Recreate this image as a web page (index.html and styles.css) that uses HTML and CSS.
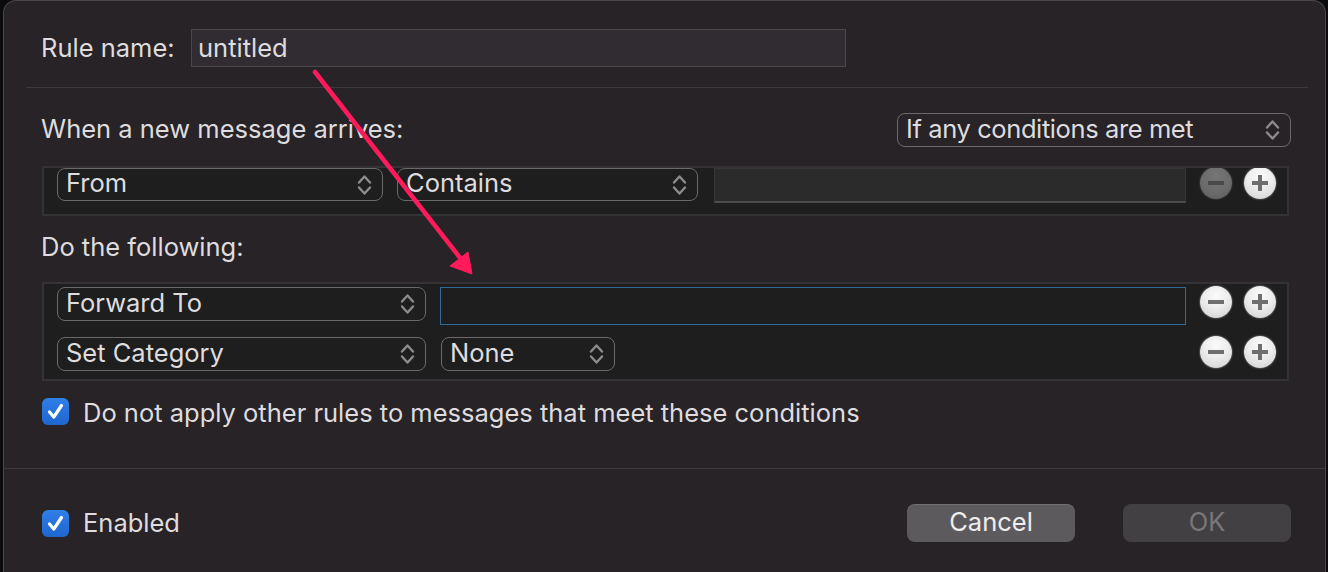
FILE: index.html
```html
<!DOCTYPE html>
<html>
<head>
<meta charset="utf-8">
<link rel="stylesheet" href="styles.css">
</head>
<body>
<div class="window">
  <div class="name-row">
    <span class="lbl name-lbl">Rule name:</span>
    <div class="field name-field">untitled</div>
  </div>
  <div class="sep sep-inset"></div>
  <div class="when-row">
    <span class="lbl">When a new message arrives:</span>
    <div class="popup popup-any"><span>If any conditions are met</span>
      <svg class="chev" viewBox="0 0 15 22"><path d="M2 8.5 L7.5 2.5 L13 8.5 M2 13.5 L7.5 19.5 L13 13.5"/></svg></div>
  </div>
  <div class="box cond-box">
    <div class="brow cond-row">
      <div class="popup popup-from"><span>From</span>
        <svg class="chev" viewBox="0 0 15 22"><path d="M2 8.5 L7.5 2.5 L13 8.5 M2 13.5 L7.5 19.5 L13 13.5"/></svg></div>
      <div class="popup popup-contains"><span>Contains</span>
        <svg class="chev" viewBox="0 0 15 22"><path d="M2 8.5 L7.5 2.5 L13 8.5 M2 13.5 L7.5 19.5 L13 13.5"/></svg></div>
      <div class="field cond-field"></div>
      <div class="pm pm-minus disabled"><span class="bar"></span></div>
      <div class="pm pm-plus"><span class="bar"></span><span class="bar vbar"></span></div>
    </div>
  </div>
  <div class="lbl do-lbl">Do the following:</div>
  <div class="box act-box">
    <div class="brow act-row1">
      <div class="popup popup-action"><span>Forward To</span>
        <svg class="chev" viewBox="0 0 15 22"><path d="M2 8.5 L7.5 2.5 L13 8.5 M2 13.5 L7.5 19.5 L13 13.5"/></svg></div>
      <div class="field fwd-field"></div>
      <div class="pm pm-minus"><span class="bar"></span></div>
      <div class="pm pm-plus"><span class="bar"></span><span class="bar vbar"></span></div>
    </div>
    <div class="brow act-row2">
      <div class="popup popup-action"><span>Set Category</span>
        <svg class="chev" viewBox="0 0 15 22"><path d="M2 8.5 L7.5 2.5 L13 8.5 M2 13.5 L7.5 19.5 L13 13.5"/></svg></div>
      <div class="popup popup-none"><span>None</span>
        <svg class="chev" viewBox="0 0 15 22"><path d="M2 8.5 L7.5 2.5 L13 8.5 M2 13.5 L7.5 19.5 L13 13.5"/></svg></div>
      <div class="pm pm-minus push"><span class="bar"></span></div>
      <div class="pm pm-plus"><span class="bar"></span><span class="bar vbar"></span></div>
    </div>
  </div>
  <div class="check-row stop-row">
    <span class="checkbox"><svg viewBox="0 0 27 27"><path d="M7.5 14 L11.8 19 L19.5 7.5"/></svg></span>
    <span class="lbl">Do not apply other rules to messages that meet these conditions</span>
  </div>
  <div class="sep sep-full"></div>
  <div class="bottom-row">
    <div class="check-row">
      <span class="checkbox"><svg viewBox="0 0 27 27"><path d="M7.5 14 L11.8 19 L19.5 7.5"/></svg></span>
      <span class="lbl">Enabled</span>
    </div>
    <div class="buttons">
      <div class="btn btn-cancel">Cancel</div>
      <div class="btn btn-ok">OK</div>
    </div>
  </div>
  <svg class="arrow" viewBox="0 0 1328 572" width="1328" height="572">
    <line x1="315" y1="72" x2="461" y2="259" />
    <polygon points="472,274 450,266 468,252" />
  </svg>
</div>
</body>
</html>
```

FILE: styles.css
```css
html, body {
  margin: 0;
  padding: 0;
  background: #0c0b0c;
  height: 572px;
  overflow: hidden;
}

body {
  font-family: "Inter", "Liberation Sans", sans-serif;
  font-size: 25.5px;
  color: #dedcde;
}

.window {
  position: relative;
  margin-left: 3px;
  width: 1323px;
  height: 580px;
  box-sizing: border-box;
  background: #272327;
  border: 1px solid #4a474a;
  border-bottom: none;
  border-radius: 13px 13px 0 0;
  padding: 28px 34px 0 37px;
}

.lbl {
  line-height: 30px;
  white-space: nowrap;
}

.name-row {
  display: flex;
  align-items: center;
  height: 38px;
}

.name-lbl {
  width: 150px;
}

.field {
  box-sizing: border-box;
  background: #2a2a2a;
}

.name-field {
  width: 655px;
  height: 38px;
  background: #312c31;
  border: 1px solid #4b474b;
  padding-left: 6px;
  line-height: 35px;
}

.sep {
  height: 1px;
  background: #3d393d;
}

.sep-inset {
  margin: 20px -17px 0 -15px;
}

.sep-full {
  margin: 43px -34px 0 -38px;
}

.when-row {
  display: flex;
  align-items: center;
  justify-content: space-between;
  margin-top: 25px;
  height: 34px;
}

.when-row .lbl {
  padding-bottom: 3px;
}

.popup {
  box-sizing: border-box;
  height: 34px;
  border: 1.5px solid #6b686b;
  border-radius: 8px;
  display: flex;
  align-items: center;
  justify-content: space-between;
  padding: 0 10px 0 8px;
  white-space: nowrap;
}

.popup span {
  padding-bottom: 4px;
}

.popup-any span {
  letter-spacing: -0.4px;
}

.chev {
  width: 15px;
  height: 22px;
  flex: none;
}

.chev path {
  fill: none;
  stroke: #8e8b8e;
  stroke-width: 2.4;
  stroke-linecap: round;
  stroke-linejoin: round;
}

.popup-any {
  width: 394px;
}

.box {
  background: #1e1e1e;
  border: 2px solid #343234;
  margin: 0 2px 0 1px;
  box-sizing: border-box;
}

.cond-box {
  margin-top: 19px;
  height: 50px;
  overflow: hidden;
}

.brow {
  display: flex;
  align-items: flex-start;
  padding-left: 13px;
  padding-right: 11px;
}

.popup-from {
  width: 326px;
  height: 33px;
}

.popup-contains {
  width: 301px;
  height: 33px;
  margin-left: 14px;
}

.cond-field {
  width: 472px;
  height: 35px;
  margin-left: 16px;
  background: #2b2b2b;
  border: 1px solid #363636;
  border-bottom: 2px solid #4d4d4d;
}

.pm {
  position: relative;
  flex: none;
  width: 32px;
  height: 32px;
  border-radius: 50%;
  background: radial-gradient(circle at 50% 30%, #fbfbfb 0%, #ececec 45%, #cfcfcf 100%);
  box-shadow: 0 0 1.5px 0.5px rgba(255, 255, 255, 0.35);
}

.pm .bar {
  position: absolute;
  left: 8px;
  top: 14px;
  width: 16px;
  height: 4px;
  background: #6e6e6e;
}

.pm .vbar {
  left: 14px;
  top: 8px;
  width: 4px;
  height: 16px;
}

.pm-minus {
  margin-left: 14px;
}

.pm-plus {
  margin-left: 12px;
}

.pm.disabled {
  background: radial-gradient(circle at 50% 30%, #767676 0%, #6a6a6a 60%, #5c5c5c 100%);
  box-shadow: 0 0 1.5px 0.5px rgba(120, 120, 120, 0.4);
}

.pm.disabled .bar {
  background: #4a4a4a;
}

.do-lbl {
  margin-top: 16px;
  height: 32px;
}

.act-box {
  margin-top: 18px;
  height: 99px;
  padding-top: 3px;
}

.act-row1 {
  height: 38px;
}

.act-row2 {
  margin-top: 12px;
  height: 34px;
}

.brow .pm {
  margin-top: -1px;
}

.popup-action {
  width: 369px;
}

.fwd-field {
  width: 747px;
  height: 38px;
  margin-left: 14px;
  background: #1e1e1e;
  border: 1.5px solid #336b95;
}

.popup-none {
  width: 174px;
  margin-left: 15px;
}

.pm-minus.push {
  margin-left: auto;
}

.check-row {
  display: flex;
  align-items: center;
  height: 27px;
}

.stop-row {
  margin-top: 17px;
  margin-left: 1px;
}

.stop-row .lbl {
  padding-top: 2px;
}

.checkbox {
  flex: none;
  width: 27px;
  height: 27px;
  border-radius: 6px;
  background: linear-gradient(#2f7fe6, #1f66cf);
  margin-right: 14px;
}

.checkbox svg {
  display: block;
  width: 27px;
  height: 27px;
}

.checkbox path {
  fill: none;
  stroke: #ffffff;
  stroke-width: 3.2;
  stroke-linecap: round;
  stroke-linejoin: round;
}

.bottom-row {
  display: flex;
  align-items: center;
  justify-content: space-between;
  margin-top: 35px;
  margin-left: 1px;
  height: 38px;
}

.buttons {
  display: flex;
  gap: 48px;
}

.btn {
  width: 168px;
  height: 38px;
  border-radius: 8px;
  text-align: center;
  line-height: 36px;
  box-sizing: border-box;
}

.btn-cancel {
  background: #5d5a5d;
  color: #eeeeee;
  box-shadow: inset 0 1px 0 rgba(255, 255, 255, 0.12);
}

.btn-ok {
  background: #434043;
  color: #7a777a;
}

.arrow {
  position: absolute;
  left: -4px;
  top: -1px;
  pointer-events: none;
}

.arrow line {
  stroke: #ff1b5b;
  stroke-width: 4.5;
  stroke-linecap: round;
}

.arrow polygon {
  fill: #ff1b5b;
  stroke: #ff1b5b;
  stroke-width: 1;
  stroke-linejoin: round;
}
```
